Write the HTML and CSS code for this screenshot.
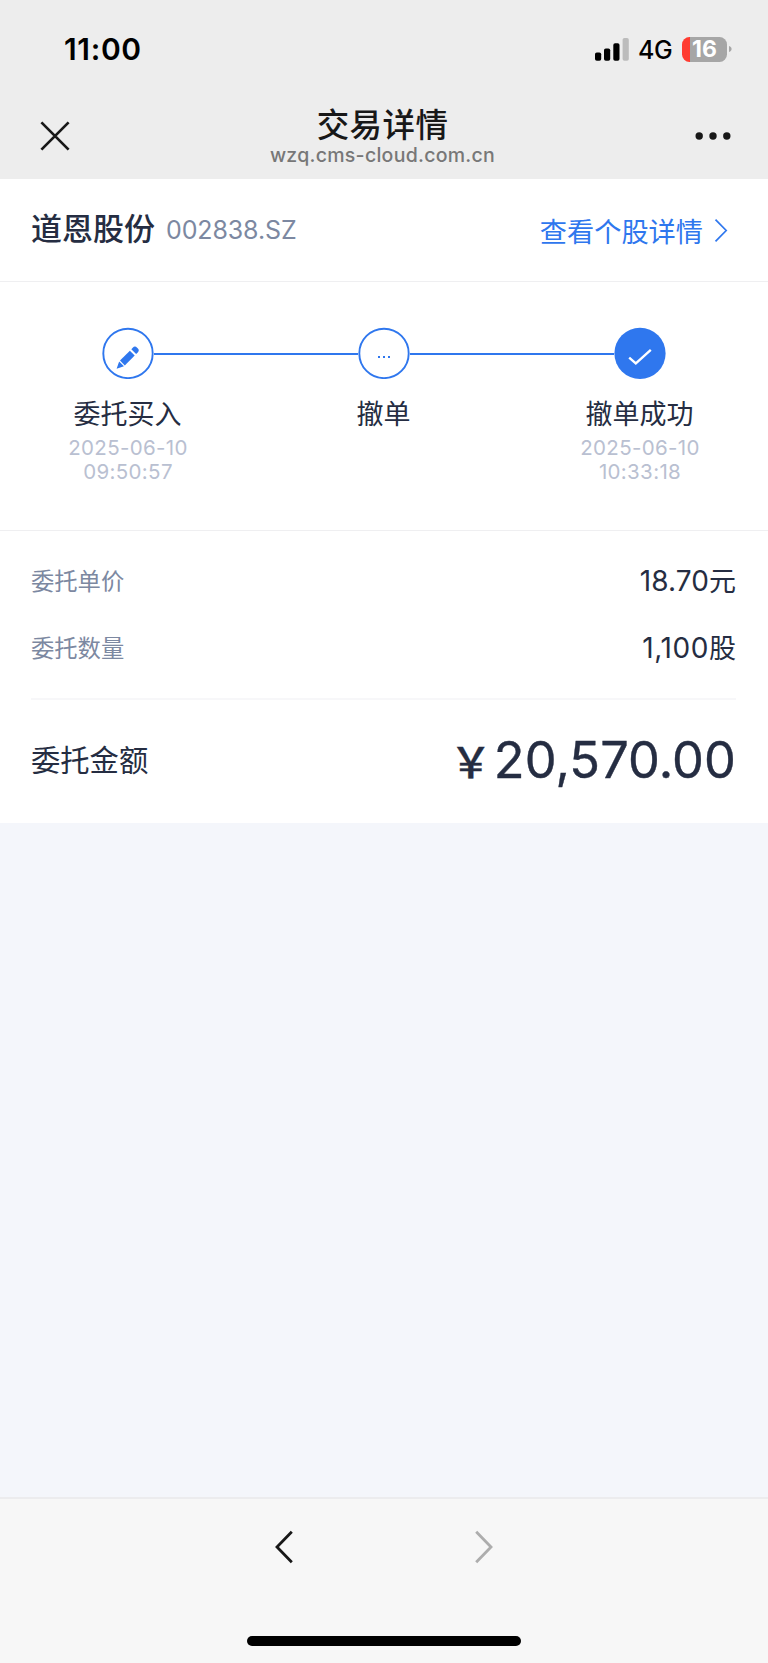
FILE: index.html
```html
<!DOCTYPE html>
<html lang="zh-CN">
<head>
<meta charset="utf-8">
<title>交易详情</title>
<link rel="stylesheet" href="styles.css">
</head>
<body>
<div class="app">
  <header class="top">
    <div class="status">
      <span class="clock">11:00</span>
      <div class="indicators">
        <svg class="signal" width="36" height="24" viewBox="0 0 36 24">
          <rect x="1" y="15.5" width="6.2" height="8.2" rx="1.8"/>
          <rect x="10" y="11.5" width="6.2" height="12.2" rx="1.8"/>
          <rect x="19.3" y="6.3" width="6.2" height="17.4" rx="1.8"/>
          <rect x="28.6" y="1" width="6.2" height="22.7" rx="1.8" fill="#bcbcbc"/>
        </svg>
        <span class="network">4G</span>
        <div class="battery"><span class="level">16</span></div>
        <svg class="nub" width="4" height="8" viewBox="0 0 4 8"><path d="M0 0C4.6 1.2 4.6 6.8 0 8Z" fill="#a6a6a6"/></svg>
      </div>
    </div>
    <div class="nav">
      <svg class="close" width="30" height="30" viewBox="0 0 30 30"><path d="M1.4 1.4 28.6 28.6M28.6 1.4 1.4 28.6" fill="none" stroke="#181818" stroke-width="2.7"/></svg>
      <div class="heading">
        <div class="title">交易详情</div>
        <div class="url">wzq.cms-cloud.com.cn</div>
      </div>
      <svg class="more" width="36" height="8" viewBox="0 0 36 8" fill="#181818"><circle cx="4.2" cy="4" r="3.7"/><circle cx="18" cy="4" r="3.7"/><circle cx="31.8" cy="4" r="3.7"/></svg>
    </div>
  </header>

  <section class="stock">
    <div class="stock-id"><span class="stock-name">道恩股份</span><span class="stock-code">002838.SZ</span></div>
    <div class="link">查看个股详情<svg width="14" height="24" viewBox="0 0 14 24"><path d="M1.5 1.7 12.2 12.5 1.5 23.3" fill="none" stroke="#2f77ee" stroke-width="1.7"/></svg></div>
  </section>

  <section class="steps">
    <div class="step">
      <div class="track"><i class="rail hidden"></i>
        <svg width="52" height="52" viewBox="0 0 52 52"><circle cx="26" cy="26.4" r="24.7" fill="#fff" stroke="#2f77ee" stroke-width="1.9"/>
          <g transform="translate(14.6 41.8) rotate(-45)" fill="#2f77ee"><path d="M0 0 7-3.4V3.4Z"/><rect x="8.2" y="-3.4" width="14" height="6.8"/><path d="M24.2-3.4H26.2A3 3 0 0 1 29.4-.4V.4A3 3 0 0 1 26.2 3.4H24.2Z"/></g>
        </svg><i class="rail"></i></div>
      <div class="step-name">委托买入</div>
      <div class="step-time">2025-06-10<br>09:50:57</div>
    </div>
    <div class="step">
      <div class="track"><i class="rail"></i>
        <svg width="52" height="52" viewBox="0 0 52 52"><circle cx="26" cy="26.4" r="24.7" fill="#fff" stroke="#2f77ee" stroke-width="1.9"/>
          <g fill="#2f77ee"><rect x="20" y="29" width="2" height="2"/><rect x="25" y="29" width="2" height="2"/><rect x="30" y="29" width="2" height="2"/></g>
        </svg><i class="rail"></i></div>
      <div class="step-name">撤单</div>
    </div>
    <div class="step">
      <div class="track"><i class="rail"></i>
        <svg width="52" height="52" viewBox="0 0 52 52"><circle cx="26" cy="26.4" r="25.6" fill="#2f77ee"/>
          <path d="M15.2 30.6 21.8 36.3 36.8 22.9" fill="none" stroke="#fff" stroke-width="2.4"/>
        </svg><i class="rail hidden"></i></div>
      <div class="step-name">撤单成功</div>
      <div class="step-time">2025-06-10<br>10:33:18</div>
    </div>
  </section>

  <section class="details">
    <div class="row"><span class="label">委托单价</span><span class="value">18.70<b class="unit">元</b></span></div>
    <div class="row"><span class="label">委托数量</span><span class="value"><span class="quantity">1,100</span><b class="unit">股</b></span></div>
    <div class="total"><span class="total-label">委托金额</span><span class="amount"><b class="yen">&#65509;</b>20,570.00</span></div>
  </section>

  <main class="blank"></main>

  <footer class="toolbar">
    <div class="arrows">
      <svg width="20" height="34" viewBox="0 0 20 34"><path d="M17.8 1.8 3 17 17.8 32.2" fill="none" stroke="#181818" stroke-width="2.8"/></svg>
      <svg width="20" height="34" viewBox="0 0 20 34"><path d="M2.2 1.8 17 17 2.2 32.2" fill="none" stroke="#adadad" stroke-width="2.8"/></svg>
    </div>
    <div class="home"></div>
  </footer>
</div>
</body>
</html>
```
FILE: styles.css
```css
* { box-sizing: border-box; }
body { margin: 0; font-family: Inter, "Noto Sans CJK SC", sans-serif; color: #252d42; background: #f4f6fb; }
svg { display: block; flex: none; }
.app { width: 768px; height: 1663px; display: flex; flex-direction: column; overflow: hidden; }

.top { height: 179px; background: #ededed; color: #000; flex: none; }
.status { height: 96px; padding: 0 36px 0 64px; display: flex; justify-content: space-between; align-items: center; }
.clock { font-size: 30px; font-weight: 600; line-height: 36px; padding-top: 2px; letter-spacing: .65px; }
.indicators { display: flex; align-items: center; }
.signal { margin-right: 8px; margin-top: 1px; }
.network { font-size: 25px; font-weight: 500; line-height: 30px; width: 34px; margin-right: 10px; margin-top: 4px; letter-spacing: -.5px; }
.battery { width: 45px; height: 25px; border-radius: 7.5px; margin-top: 2px; background: linear-gradient(90deg, #ff3b30 8px, #a6a6a6 8px); color: #fff; padding-left: 10px; }
.level { display: block; font-size: 23px; font-weight: 700; line-height: 25px; letter-spacing: 0; }
.nub { margin-left: 2px; margin-top: 2px; width: 3px; }

.nav { height: 83px; padding: 0 37px 0 40px; display: flex; align-items: center; justify-content: space-between; }
.close, .more { margin-bottom: 3px; }
.heading { text-align: center; }
.title { font-size: 32.5px; font-weight: 500; line-height: 36px; letter-spacing: .4px; color: #181818; }
.url { font-size: 19.5px; font-weight: 500; line-height: 23px; letter-spacing: .27px; color: #777; }

.stock { height: 103px; flex: none; padding: 0 40px 0 31px; background: #fff; border-bottom: 1px solid #efeff1; display: flex; align-items: center; justify-content: space-between; }
.stock-id { display: flex; align-items: center; padding-bottom: 2px; }
.stock-name { font-size: 31px; font-weight: 500; line-height: 44px; }
.stock-code { font-size: 25px; line-height: 30px; color: #7c88a1; margin-left: 11px; margin-top: 1px; letter-spacing: -.12px; }
.link { display: flex; align-items: center; font-size: 27.2px; color: #2f77ee; gap: 11px; }

.steps { height: 249px; flex: none; padding-top: 45px; background: #fff; border-bottom: 1px solid #efeff1; display: grid; grid-template-columns: repeat(3, 1fr); text-align: center; }
.track { display: flex; align-items: center; height: 52px; }
.rail { flex: 1; height: 2px; margin-top: 1px; background: #2f77ee; }
.hidden { visibility: hidden; }
.step-name { font-size: 27px; line-height: 38px; margin-top: 17px; margin-right: 1px; }
.step-time { font-size: 20.5px; line-height: 24px; color: #b9c0d1; letter-spacing: .35px; margin-top: 2px; }

.details { height: 292px; flex: none; padding: 15px 32px 0 31px; background: #fff; }
.row { height: 67px; display: flex; align-items: center; justify-content: space-between; }
.label { font-size: 23.3px; color: #7c88a1; }
.value { font-size: 28px; letter-spacing: .1px; }
.quantity { letter-spacing: .6px; }
.unit { font-weight: 400; font-size: 27px; letter-spacing: 0; }
.total { height: 124px; margin-top: 18px; border-top: 2px solid #f7f7f9; display: flex; align-items: center; justify-content: space-between; padding-bottom: 2px; }
.total-label { font-size: 29.3px; line-height: 44px; padding-top: 2px; }
.amount { display: flex; align-items: baseline; font-size: 50.5px; line-height: 60px; font-weight: 400; letter-spacing: .1px; -webkit-text-stroke: .4px #252d42; }
.yen { font-family: "Noto Sans CJK SC", sans-serif; font-size: 42px; line-height: 60px; font-weight: 500; margin-right: 2px; }

.blank { flex: 1; background: #f4f6fb; }

.toolbar { height: 166px; flex: none; background: #f7f7f7; border-top: 2px solid #ececee; display: flex; flex-direction: column; align-items: center; justify-content: space-between; padding: 31px 0 17px; }
.arrows { display: flex; gap: 180px; }
.home { width: 274px; height: 10px; border-radius: 5px; background: #000; }
```
